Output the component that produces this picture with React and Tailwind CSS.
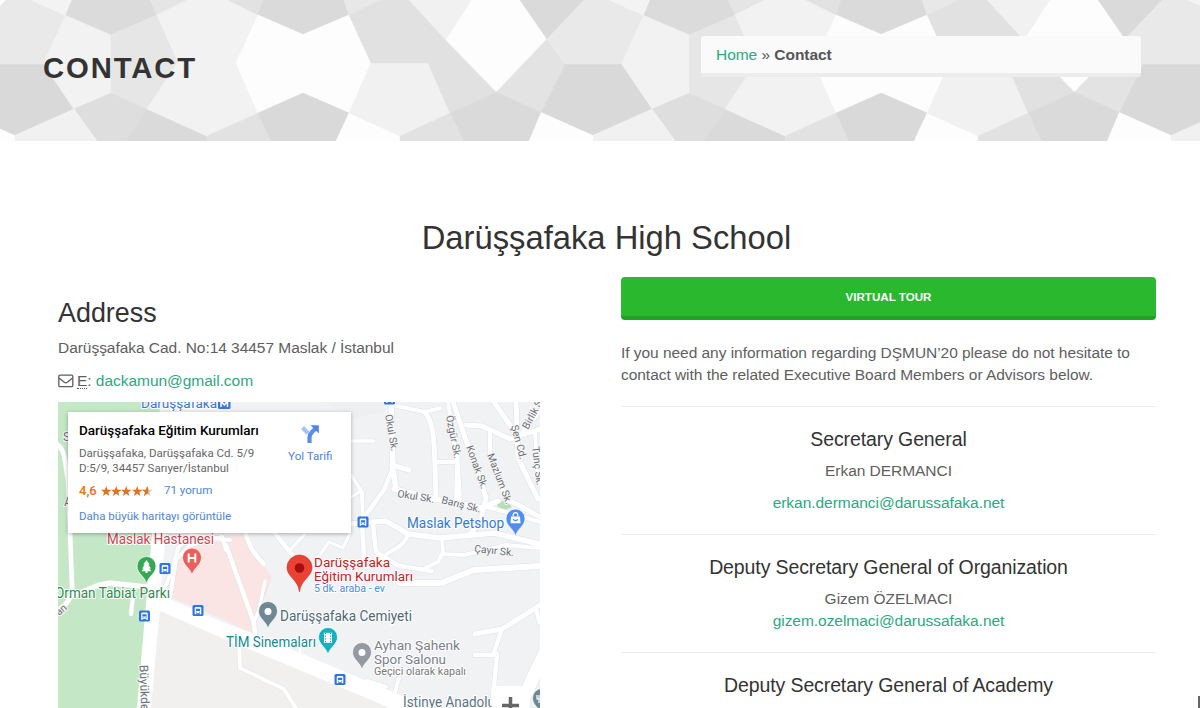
import React from "react";

const TILE = [
  ["-13,64 43.5,64 74,109 14.5,135.5 -37,112.5", "#d9d9d9"],
  ["-31,39 -13,64 43.5,64 65.5,15.5 31,0 6,0", "#e9e9e9"],
  ["65.5,15.5 31,0 72,0", "#f3f3f3"],
  ["65.5,15.5 111,35 157,15 150,0 72,0", "#dbdbdb"],
  ["157,15 150,0 187,0", "#e5e5e5"],
  ["65.5,15.5 111,35 111,93 74,109 43.5,64", "#f2f2f2"],
  ["111,35 157,15 178,62 147,109 111,93", "#e6e6e6"],
  ["111,93 74,109 97,141 126,141 147,109", "#dedede"],
  ["147,109 207,136 207,141 126,141", "#dadada"],
  ["74,109 14.5,135.5 14.5,141 97,141", "#f1f1f1"],
  ["-37,112.5 14.5,135.5 14.5,141 -49,141", "#fdfdfd"],
  ["157,15 187,0 228,0 258,15 236,63 258,113 207,136 147,109 178,62", "#f2f2f2"],
  ["228,0 258,15 263,0", "#e2e2e2"],
  ["258,15 303,34.5 349,15 344,0 263,0", "#dadada"],
  ["236,63 258,15 303,34.5 349,15 371,63 349,113 303,93 258,113", "#fdfdfd"],
  ["349,15 344,0 381,0", "#e8e8e8"],
  ["258,113 207,136 207,141 271,141", "#e2e2e2"],
  ["258,113 303,93 349,113 336,141 271,141", "#d9d9d9"],
  ["349,113 400,136 400,141 336,141", "#fdfdfd"],
  ["371,63 428,63 450,113 400,136 349,113", "#f1f1f1"],
  ["349,15 381,0 409,0 446,40 496.5,92 450,113 428,63 371,63", "#e1e1e1"],
  ["409,0 472,0 446,40", "#f1f1f1"],
  ["472,0 520,0 547,39 496.5,92 446,40", "#fdfdfd"],
  ["520,0 584,0 547,39", "#dadada"],
  ["547,39 496.5,92 541,112.5 565,64", "#e3e3e3"],
  ["496.5,92 541,112.5 529,141 463,141 450,113", "#dadada"],
  ["450,113 400,136 400,141 463,141", "#e2e2e2"],
];

const ROADS = [
  ["M57 444 C66 450 65 466 68 480 L72 585 C73 600 64 607 57 611", 4.5],
  ["M72 596 L99 585 L110 583 L148 587", 5],
  ["M133 596 L131 614", 4],
  ["M164 590 L173 567 L178 548 L190 535 L230 540", 4],
  ["M170 598 L176 560 L190 545 L222 537 L226 550", 4],
  ["M226 545 L254 623 L255 634", 4.5],
  ["M265 581 L259 610 L253 624", 3.5],
  ["M245 530 C248 545 254 555 264 564", 4.5],
  ["M274 532 L290 552 L300 566", 4.5],
  ["M290 550 L305 534", 3.5],
  ["M316 560 L329 542 L343 548 L350 533", 3.5],
  ["M351 441 L374 441", 3.5],
  ["M391 400 L393 470 L396 489", 5.5],
  ["M388 404 L425 412 L440 408", 4],
  ["M425 412 C436 426 434 450 436 498", 5],
  ["M392 465 L409 470", 5],
  ["M393 468 L384 490 L362 520 L364 560", 4.5],
  ["M394 489 L436 499 L482 508 L498 501", 5.5],
  ["M436 462 L457 462 M457 447 L460 500", 4],
  ["M448 402 L457 464 L456 501", 4],
  ["M453 402 L470 452 L486 497 L481 520 L471 533", 5],
  ["M466 425 L482 426 L510 439 L540 429", 5],
  ["M490 433 L490 458 L507 500", 4],
  ["M494 402 L514 431", 5],
  ["M516 401 L518 458 L538 499", 5],
  ["M540 411 L522 433", 4],
  ["M535 430 L538 485", 4],
  ["M508 500 L522 507 L540 517", 5],
  ["M487 507 L521 516 L540 522", 4],
  ["M351 524 L386 521 L408 534 L440 538 L494 533 L540 544", 5.5],
  ["M408 534 C404 550 388 548 380 561", 4],
  ["M373 524 L376 552 L399 566 L432 571", 4.5],
  ["M442 538 L443 554 L464 555 L506 545 L540 548", 4],
  ["M443 552 L438 562 L425 568", 4],
  ["M351 475 L362 492 L363 523", 4],
  ["M351 497 L361 491", 3.5],
  ["M400 583 L441 583 L474 570 L540 566", 6],
  ["M475 634 L502 629 L540 605", 5],
  ["M502 629 L493 655 L475 655", 4.5],
  ["M497 654 L492 708", 4.5],
  ["M536 608 L539 622", 4],
  ["M239 640 L240 668 L284 689 L297 710", 4],
  ["M300 641 L300 655", 3],
  ["M399 678 L394 696", 4],
  ["M367 681 L386 687", 4],
  ["M546 650 L518 710", 13],
];

const STATIONS = [[165, 568.5], [144.5, 616], [198, 610.5], [363, 522], [340, 679.5], [389.5, 399]];

const LABELS = [
  { x: 107, y: 544, t: "Maslak Hastanesi", f: "#cf4450", s: 13.8, w: 107 },
  { x: 55, y: 598, t: "Orman Tabiat Parkı", f: "#2e8b4f", s: 13.8, w: 115 },
  { x: 141, y: 408, t: "Darüşşafaka", f: "#3a76d0", s: 13.6, w: 76 },
  { x: 407, y: 528, t: "Maslak Petshop", f: "#3178dc", s: 13.8, w: 97 },
  { x: 314, y: 567, t: "Darüşşafaka", f: "#c5221f", s: 13.6, w: 76 },
  { x: 314, y: 581, t: "Eğitim Kurumları", f: "#c5221f", s: 13.6, w: 99 },
  { x: 314, y: 592, t: "5 dk. araba - ev", f: "#4a8ce8", s: 10.6, w: 71 },
  { x: 280, y: 621, t: "Darüşşafaka Cemiyeti", f: "#4f6875", s: 13.8, w: 132 },
  { x: 226, y: 647, t: "TİM Sinemaları", f: "#128a91", s: 13.8, w: 90 },
  { x: 374, y: 650, t: "Ayhan Şahenk", f: "#7b8087", s: 13.6, w: 86 },
  { x: 374, y: 664, t: "Spor Salonu", f: "#7b8087", s: 13.6, w: 72 },
  { x: 374, y: 675, t: "Geçici olarak kapalı", f: "#777", s: 10.8, w: 92 },
  { x: 403, y: 707, t: "İstinye Anadolu", f: "#5b7482", s: 13.8, w: 92 },
];

const STREETS = [
  { x: 385, y: 415, r: 80, t: "Okul Sk." },
  { x: 397, y: 497, r: 9, t: "Okul Sk." },
  { x: 446, y: 416, r: 79, t: "Özgür Sk." },
  { x: 466, y: 447, r: 70, t: "Konak Sk." },
  { x: 487, y: 455, r: 69, t: "Mazlum Sk." },
  { x: 441, y: 503, r: 14, t: "Barış Sk." },
  { x: 474, y: 552, r: 6, t: "Çayır Sk." },
  { x: 511, y: 426, r: 75, t: "Şen Cd." },
  { x: 532, y: 447, r: 83, t: "Tunç Sk." },
  { x: 528, y: 430, r: -62, t: "Birlik Sk." },
  { x: 139.5, y: 665, r: 88, t: "Büyükdere", s: 12 },
  { x: 59, y: 616, r: -40, t: "an" },
];

function Pin({ x, y, color, children }) {
  return (
    <g transform={`translate(${x} ${y})`}>
      <path d="M0 17 C-1.5 9 -9.5 7 -9.5 -1 A9.5 9.5 0 1 1 9.5 -1 C9.5 7 1.5 9 0 17Z" fill={color} stroke="#fff" strokeWidth="0.7" />
      {children}
    </g>
  );
}

function MapDrawing() {
  return (
    <svg className="block h-[306px] w-[482px]" viewBox="58 402 482 306" fontFamily="Roboto, sans-serif">
      <rect x="58" y="402" width="482" height="306" fill="#f0f2f4" />
      <path d="M325 402 L384 402 L384 413 L350 418Z" fill="#edeff1" />
      <path d="M150 625 L162 606 L200 622 L410 708 L150 708Z" fill="#f1f0ef" />
      <path d="M58 402 H160 L153 580 L139 708 H58Z" fill="#c4e8c6" />
      <path d="M165 595 L180 535 L243 535 L272 577 L252 634 L225 620Z" fill="#fae5e4" />
      <g fill="none" strokeLinejoin="round" strokeLinecap="round">
        {ROADS.map(([d, w], i) => <path key={i} d={d} stroke="#dfe2e5" strokeWidth={w + 1} />)}
        {ROADS.map(([d, w], i) => <path key={i} d={d} stroke="#fff" strokeWidth={w} />)}
      </g>
      <path d="M497 505 L503 500.5 L508 503 L512 507 L506 509.5 L499 507.5Z" fill="#b8deb9" />
      <path d="M152 533 H166 L160 595 L220 621 L260 636 L400 695 L425 708 H390 L350 691 L297 669 L222 638 L160 611 L157 640 L151 708 H137 L148 580Z" fill="#fff" />
      <g fill="#6d7075" stroke="#f7f8f9" strokeWidth="2" paintOrder="stroke" strokeLinejoin="round">
        {STREETS.map((l, i) => <text key={i} fontSize={l.s || 10.3} transform={`translate(${l.x} ${l.y}) rotate(${l.r})`}>{l.t}</text>)}
        <text x="63" y="441" fontSize="12">S</text>
        <text x="64" y="506" fontSize="12">A</text>
      </g>
      {STATIONS.map(([x, y]) => (
        <g key={`${x}-${y}`} transform={`translate(${x} ${y})`}>
          <rect x="-5.5" y="-5.5" width="11" height="11" rx="1.5" fill="#2d75e0" />
          <path d="M-3.3 3.8V-2.2Q-3.3 -3.5 -2 -3.5H2Q3.3 -3.5 3.3 -2.2V3.8H1.8V2.8H-1.8V3.8Z" fill="#fff" />
          <path d="M-2.1 -1.8H2.1V0.4H-2.1Z M-2.2 1.3H-1V2.1H-2.2Z M1 1.3H2.2V2.1H1Z" fill="#2d75e0" />
        </g>
      ))}
      <rect x="218" y="398" width="12.5" height="11" rx="1.5" fill="#3a78d8" />
      <path d="M221 407V401L224.3 405L227.5 401V407" fill="none" stroke="#fff" strokeWidth="1.5" />
      <Pin x={192} y={558.5} color="#e8615b">
        <path d="M-3.3 -5V4M3.3 -5V4M-3.3 -.5H3.3" stroke="#fff" strokeWidth="2" />
      </Pin>
      <Pin x={146.5} y={567} color="#34a853">
        <path d="M0 -7L-3.2 -2.5H-1.8L-4.5 1.5H-2.7L-5 4.2H-1V6H1V4.2H5L2.7 1.5H4.5L1.8 -2.5H3.2Z" fill="#fff" />
      </Pin>
      <Pin x={515.5} y={519.5} color="#4f8df0">
        <path d="M-4.5 -3H4.5L5 3.8H-5Z" fill="#fff" />
        <path d="M-2.3 -3V-4.5A2.3 2.3 0 0 1 2.3 -4.5V-3" fill="none" stroke="#fff" strokeWidth="1.2" />
        <path d="M-2.2 -.5A2.3 2.3 0 0 0 2.2 -.5" fill="none" stroke="#4f8df0" strokeWidth="1.2" />
      </Pin>
      <Pin x={268} y={612} color="#708894"><circle cy="-.5" r="3.5" fill="#fff" /></Pin>
      <Pin x={328} y={638} color="#14b2bd">
        <path d="M-4 -5.2H4V4.8H-4Z" fill="#fff" />
        <path d="M-2.5 -5V5M2.5 -5V5" stroke="#14b2bd" strokeWidth="1" strokeDasharray="1.3 1.3" />
      </Pin>
      <Pin x={362} y={653} color="#9599a2"><circle cy="-.5" r="3.5" fill="#fff" /></Pin>
      <Pin x={542} y={699} color="#708894"><path d="M-3 -4V4M-5 -4V0H-1" fill="none" stroke="#fff" strokeWidth="1.2" /></Pin>
      <path d="M299.5 592 C298 579 287 577 287 567.5 A12.5 12.5 0 1 1 312 567.5 C312 577 301 579 299.5 592Z" fill="#ea4335" stroke="#c5362b" strokeWidth=".6" />
      <circle cx="299.5" cy="568" r="4.8" fill="#a50e0e" />
      <g stroke="#fff" strokeWidth="2" strokeLinejoin="round" paintOrder="stroke">
        {LABELS.map((l) => (
          <text key={`${l.x}-${l.y}`} x={l.x} y={l.y} fill={l.f} fontSize={l.s} textLength={l.w} lengthAdjust="spacingAndGlyphs">{l.t}</text>
        ))}
      </g>
      <rect x="491.5" y="686" width="38" height="30" fill="#fff" />
      <path d="M510.5 697V714M502 705.5H519" stroke="#666" strokeWidth="3.5" />
    </svg>
  );
}

function Star({ half }) {
  const d = "M5 0L6.3 3.5L10 3.7L7.1 6L8.1 9.6L5 7.5L1.9 9.6L2.9 6L0 3.7L3.7 3.5Z";
  return (
    <svg className="size-[10.4px]" viewBox="0 0 10 10">
      <path d={d} fill={half ? "#c9c9c9" : "#e7711b"} />
      {half && <path d="M5 0L3.7 3.5L0 3.7L2.9 6L1.9 9.6L5 7.5H6V2.5Z" fill="#e7711b" />}
    </svg>
  );
}

function PlaceCard() {
  return (
    <div className="absolute left-[10px] top-[10px] flex h-[121px] w-[283px] justify-between bg-white pl-[11px] pr-[18.5px] font-['Roboto',sans-serif] shadow-[0_1px_4px_rgba(0,0,0,0.3)]">
      <div className="whitespace-nowrap pt-[9px]">
        <div className="text-[13.5px] font-medium leading-[18px] text-black">Darüşşafaka Eğitim Kurumları</div>
        <div className="mt-[7px] text-[11.55px] leading-[15px] text-[#666]">
          Darüşşafaka, Darüşşafaka Cd. 5/9<br />D:5/9, 34457 Sarıyer/İstanbul
        </div>
        <div className="mt-[6px] flex h-[18px] items-center text-[11.6px] text-[#4a86e0]">
          <span className="w-[21.5px] text-[13px] font-medium text-[#e7711b]">4,6</span>
          <span className="flex"><Star /><Star /><Star /><Star /><Star half /></span>
          <span className="pl-[11.5px]">71 yorum</span>
        </div>
        <div className="mt-[8px] text-[11.55px] leading-4 text-[#4a86e0]">Daha büyük haritayı görüntüle</div>
      </div>
      <div className="flex flex-col items-center pt-[12px] text-[11.6px] text-[#4a86e0]">
        <svg className="size-5" viewBox="0 0 20 20" fill="none">
          <path d="M2.5 3.5L8 9.2" stroke="#a8c5f5" strokeWidth="4.2" />
          <path d="M9.5 19V13.5Q9.5 10.5 12 8L15 5" stroke="#5a8df0" strokeWidth="4.2" />
          <path d="M10.5 1.2H18.8V9.5Z" fill="#4f86ec" />
        </svg>
        <span className="mt-[4px]">Yol Tarifi</span>
      </div>
    </div>
  );
}

function Header() {
  return (
    <header className="relative h-[141px] overflow-hidden">
      <svg className="absolute inset-0 h-[141px] w-[1200px]" viewBox="0 0 1200 141">
        {[0, 578.2, 1156.4].map((dx) => (
          <g key={dx} transform={`translate(${dx} 0)`}>
            {TILE.map(([p, c]) => <polygon key={p} points={p} fill={c} stroke={c} strokeWidth=".5" />)}
          </g>
        ))}
      </svg>
      <div className="relative flex justify-between pl-[43px] pr-[59px] pt-[36px]">
        <h1 className="pt-[14px] text-[29.3px] font-bold leading-9 tracking-[1.85px] text-[#333]">CONTACT</h1>
        <nav className="h-[41px] w-[440px] rounded-[3px] border-b-4 border-[#ececec] bg-[#fafafa] px-[15px] text-[15.5px] leading-[37px] tracking-[-0.04px] text-[#555]">
          <a className="text-[#2aaa80]">Home</a> » <b>Contact</b>
        </nav>
      </div>
    </header>
  );
}

export default function App() {
  return (
    <div className="h-[708px] w-[1200px] overflow-hidden bg-white font-['Liberation_Sans',Arial,sans-serif] text-[15.5px] tracking-[-0.04px] text-[#5e5e5e]">
      <Header />
      <h2 className="mt-[77px] pl-[13px] text-center text-[32.75px] leading-[40px] tracking-normal text-[#333]">Darüşşafaka High School</h2>
      <main className="mt-[19px] flex gap-[81px] pl-[58px]">
        <section className="w-[482px] shrink-0 pt-[20px]">
          <h3 className="text-[26.9px] leading-8 tracking-normal text-[#333]">Address</h3>
          <p className="mt-[8px] leading-[22px]">Darüşşafaka Cad. No:14 34457 Maslak / İstanbul</p>
          <p className="mt-[11px] flex items-center leading-[22px]">
            <svg className="mr-[3px] h-[14px] w-[16px]" viewBox="0 0 16 14" fill="none" stroke="#5e5e5e" strokeWidth="1.3">
              <rect x=".8" y="1.2" width="14" height="11.5" rx="1.2" />
              <path d="M1 4L6.3 8.3Q7.8 9.4 9.3 8.3L14.6 4" />
            </svg>
            <span className="border-b border-dotted border-[#555] leading-[14px]">E</span>:&nbsp;<a className="text-[#2aaa80]">dackamun@gmail.com</a>
          </p>
          <div className="relative mt-[10px] h-[306px] overflow-hidden tracking-normal">
            <MapDrawing />
            <PlaceCard />
          </div>
        </section>
        <section className="w-[535px] shrink-0 text-center">
          <button className="block h-[43px] w-full rounded-[4px] border-b-4 border-[#23a127] bg-[#2ab82e] pt-[1px] text-[11.6px] font-bold tracking-normal text-white">VIRTUAL TOUR</button>
          <p className="mt-[22px] text-left leading-[22px]">If you need any information regarding DŞMUN’20 please do not hesitate to contact with the related Executive Board Members or Advisors below.</p>
          <hr className="mt-[20px] border-[#eee]" />
          <h4 className="mt-[20px] text-[19.5px] leading-6 tracking-[-0.11px] text-[#333]">Secretary General</h4>
          <p className="mt-[9px] leading-[22px]">Erkan DERMANCI</p>
          <p className="mt-[10px] leading-[22px] text-[#2aaa80]">erkan.dermanci@darussafaka.net</p>
          <hr className="mt-[20px] border-[#eee]" />
          <h4 className="mt-[20px] text-[19.5px] leading-6 tracking-[-0.11px] text-[#333]">Deputy Secretary General of Organization</h4>
          <p className="mt-[9px] leading-[22px]">Gizem ÖZELMACI</p>
          <p className="leading-[22px] text-[#2aaa80]">gizem.ozelmaci@darussafaka.net</p>
          <hr className="mt-[20px] border-[#eee]" />
          <h4 className="mt-[20px] text-[19.5px] leading-6 tracking-[-0.11px] text-[#333]">Deputy Secretary General of Academy</h4>
        </section>
        <div className="-ml-[39px] mt-[419px] h-[12px] w-[2px] shrink-0 bg-[#666]" />
      </main>
    </div>
  );
}
